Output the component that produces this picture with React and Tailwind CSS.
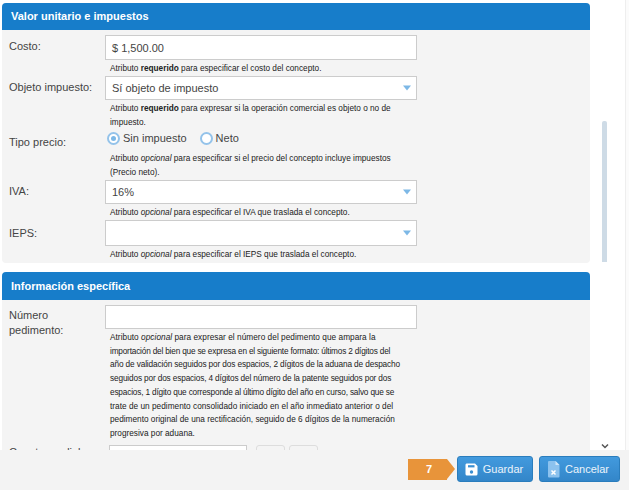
import React from "react";

function Hint({ children, leading = "leading-[14px]" }) {
  return <p className={`mt-[2px] -mb-px pl-[5px] w-[292px] text-[8.25px] text-[#222] ${leading}`}>{children}</p>;
}

function Row({ label, children, hint, labelClass = "pt-[3px]", labelLeading = "leading-[16px]", leading }) {
  return (
    <div className="flex">
      <div className={`w-[103px] shrink-0 pl-[7px] text-[11px] text-[#444] ${labelLeading} ${labelClass}`}>{label}</div>
      <div className="w-[312px]">
        {children}
        <Hint leading={leading}>{hint}</Hint>
      </div>
    </div>
  );
}

function Field({ value, select, h = "h-[24px]" }) {
  return (
    <div className={`${h} relative flex items-center bg-white border border-[#ccc] pl-[6px] pt-px text-[11px] text-[#444]`}>
      {value}
      {select && (
        <span className="absolute right-[5px] top-1/2 -translate-y-1/2 w-0 h-0 border-x-[4.5px] border-x-transparent border-t-[5px] border-t-[#7db8e6]" />
      )}
    </div>
  );
}

function Radio({ checked, label }) {
  return (
    <label className="flex items-center gap-[3px] text-[11px] text-[#444]">
      <span className="w-[13px] h-[13px] rounded-full border-2 border-[#94c3ea] bg-white flex items-center justify-center">
        {checked && <span className="w-[5px] h-[5px] rounded-full bg-[#7db8e6]" />}
      </span>
      {label}
    </label>
  );
}

function Panel({ title, children, className = "", h = "h-[28px]" }) {
  return (
    <section className={`bg-[#f4f4f4] rounded-[4px] ${className}`}>
      <h2 className={`${h} rounded-t-[4px] bg-[#177dca] text-white text-[11px] font-bold flex items-center pl-[9px]`}>{title}</h2>
      {children}
    </section>
  );
}

function Btn({ icon, label, w, gap }) {
  return (
    <button className={`${w} ${gap} h-[26px] pr-[2px] rounded-[3px] border border-[#2a7dbd] bg-gradient-to-b from-[#429ade] to-[#3386c9] text-white/90 text-[11px] flex items-center justify-center`}>
      {icon}
      {label}
    </button>
  );
}

function SaveIcon() {
  return (
    <svg width="13" height="13" viewBox="0 0 13 13">
      <path d="M1.5 0.5H10L12.5 3V11a1.5 1.5 0 0 1-1.5 1.5H2A1.5 1.5 0 0 1 0.5 11V2A1.5 1.5 0 0 1 1.5 0.5Z" fill="#fff" />
      <rect x="3" y="2.2" width="6.5" height="2.2" fill="#3a8fd3" />
      <circle cx="6.5" cy="9" r="1.7" fill="#3a8fd3" />
    </svg>
  );
}

function CancelIcon() {
  return (
    <svg width="12" height="17" viewBox="0 0 12 17">
      <path d="M1 0H7.5L11.5 4V15.5a1 1 0 0 1-1 1H1a1 1 0 0 1-1-1V1a1 1 0 0 1 1-1Z" fill="#8cc2ee" />
      <path d="M7.5 0V4H11.5Z" fill="#cfe5f7" />
      <path d="M3.5 9.5L7.5 13.5M7.5 9.5L3.5 13.5" stroke="#fff" strokeWidth="1.5" />
    </svg>
  );
}

export default function App() {
  return (
    <div className="w-[629px] h-[490px] bg-white flex flex-col overflow-hidden font-['Liberation_Sans',Arial,sans-serif]">
      <div className="h-[450px] flex overflow-hidden shrink-0">
        <div className="w-[588px] ml-[2px] pt-[3px] shrink-0">
          <Panel title="Valor unitario e impuestos" h="h-[27px]" className="pb-[2px]">
            <div className="pt-[5px] flex flex-col gap-px">
              <Row label="Costo:" hint={<>Atributo <b>requerido</b> para especificar el costo del concepto.</>}>
                <Field value="$ 1,500.00" h="h-[25px]" />
              </Row>
              <Row label="Objeto impuesto:" hint={<>Atributo <b>requerido</b> para expresar si la operación comercial es objeto o no de impuesto.</>}>
                <Field value="Sí objeto de impuesto" select />
              </Row>
              <Row label="Tipo precio:" labelClass="pt-[4px]" hint={<>Atributo <i>opcional</i> para especificar si el precio del concepto incluye impuestos (Precio neto).</>}>
                <div className="h-[20px] pb-[3px] flex items-center gap-[13px] pl-[2px]">
                  <Radio checked label="Sin impuesto" />
                  <Radio label="Neto" />
                </div>
              </Row>
              <Row label="IVA:" hint={<>Atributo <i>opcional</i> para especificar el IVA que traslada el concepto.</>}>
                <Field value="16%" select />
              </Row>
              <Row label="IEPS:" labelClass="pt-[5px]" hint={<>Atributo <i>opcional</i> para especificar el IEPS que traslada el concepto.</>}>
                <Field select h="h-[26px]" />
              </Row>
            </div>
          </Panel>
          <Panel title="Información específica" className="mt-[9px]">
            <div className="pt-[5px]">
              <Row
                label={<>Número<br />pedimento:</>}
                labelClass="pt-[3px]"
                labelLeading="leading-[14.5px]"
                leading="leading-[13.7px] whitespace-nowrap"
                hint={<><span className="tracking-[0.04px]">Atributo <i>opcional</i> para expresar el número del pedimento que ampara la</span><br />
                  <span className="tracking-[-0.19px]">importación del bien que se expresa en el siguiente formato: últimos 2 dígitos del</span><br />
                  <span className="tracking-[-0.12px]">año de validación seguidos por dos espacios, 2 dígitos de la aduana de despacho</span><br />
                  <span className="tracking-[-0.14px]">seguidos por dos espacios, 4 dígitos del número de la patente seguidos por dos</span><br />
                  <span className="tracking-[-0.17px]">espacios, 1 dígito que corresponde al último dígito del año en curso, salvo que se</span><br />
                  <span className="tracking-[0.02px]">trate de un pedimento consolidado iniciado en el año inmediato anterior o del</span><br />
                  pedimento original de una rectificación, seguido de 6 dígitos de la numeración<br />
                  progresiva por aduana.</>}
              >
                <Field />
              </Row>
              <div className="flex mt-[5px]">
                <div className="w-[107px] pl-[7px] text-[11px] leading-[14px] text-[#444]">Cuenta predial:</div>
                <div className="w-[138px] h-[24px] bg-white border border-[#ccc]" />
                <div className="w-[29px] ml-[9px] h-[24px] border border-[#ddd] rounded-[3px]" />
                <div className="w-[29px] ml-[4px] h-[24px] border border-[#ddd] rounded-[3px]" />
              </div>
            </div>
          </Panel>
        </div>
        <div className="w-[35px] shrink-0 flex flex-col">
          <div className="mt-[121px] ml-[12px] w-[5px] h-[141px] rounded-t-[2px] bg-[#cedbe6]" />
          <svg className="mt-auto ml-[11px]" width="8" height="7" viewBox="0 0 8 7">
            <path d="M1 1.5L4 4.5L7 1.5" fill="none" stroke="#555" strokeWidth="1.5" />
          </svg>
        </div>
        <div className="w-px shrink-0 bg-[#eee]" />
        <div className="flex-1 bg-[#fbfbfb]" />
      </div>
      <div className="h-[40px] pb-[2px] bg-[#f3f3f3] flex items-center justify-end pr-[9px]">
        <div className="flex items-center mr-[2px]">
          <div className="w-[39px] h-[21px] pl-[3px] bg-[#e8943a] text-white text-[11px] font-bold flex items-center justify-center">7</div>
          <div className="w-0 h-0 border-y-[10.5px] border-y-transparent border-l-[8px] border-l-[#e8943a]" />
        </div>
        <Btn icon={<SaveIcon />} gap="gap-[5px]" label="Guardar" w="w-[76px]" />
        <div className="w-[6px]" />
        <Btn icon={<CancelIcon />} gap="gap-[5px]" label="Cancelar" w="w-[81px]" />
      </div>
    </div>
  );
}
